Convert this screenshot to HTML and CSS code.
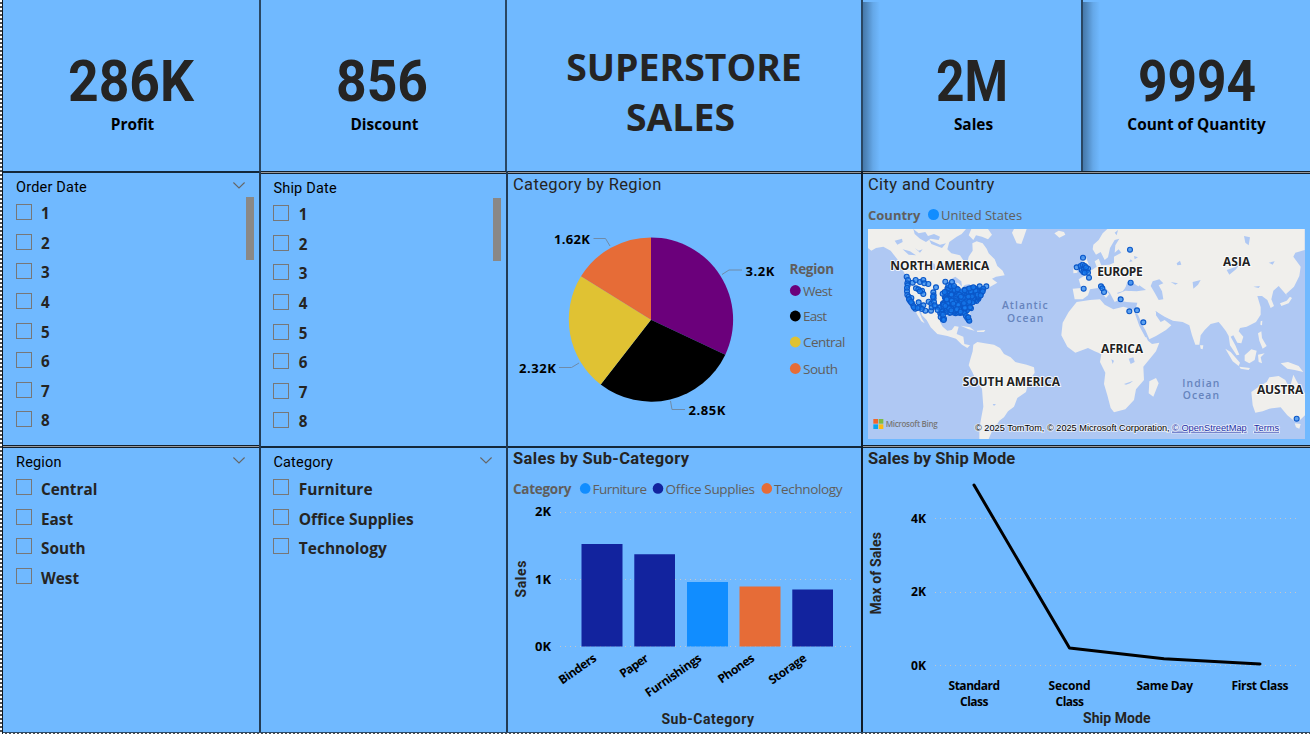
FILE: index.html
```html
<!DOCTYPE html>
<html lang="en">
<head>
<meta charset="utf-8">
<title>Superstore Sales</title>
<link rel="stylesheet" href="styles.css">
</head>
<body>
<main class="board">
  <div class="row row-kpi">
    <section class="panel kpi shift">
      <svg class="num" width="130" height="46" viewBox="0 0 130 46"><text x="1" y="43" textLength="126" lengthAdjust="spacingAndGlyphs">286K</text></svg>
      <div class="cap">Profit</div>
    </section>
    <section class="panel kpi shift">
      <svg class="num" width="100" height="46" viewBox="0 0 100 46"><text x="2" y="43" textLength="92" lengthAdjust="spacingAndGlyphs">856</text></svg>
      <div class="cap">Discount</div>
    </section>
    <section class="panel banner"><h1>SUPERSTORE<span>SALES</span></h1></section>
    <section class="panel kpi shaded shift-sm">
      <svg class="num" width="78" height="46" viewBox="0 0 78 46"><text x="2" y="43" textLength="72" lengthAdjust="spacingAndGlyphs">2M</text></svg>
      <div class="cap">Sales</div>
    </section>
    <section class="panel kpi shaded last">
      <svg class="num" width="124" height="46" viewBox="0 0 124 46"><text x="4" y="43" textLength="118" lengthAdjust="spacingAndGlyphs">9994</text></svg>
      <div class="cap">Count of Quantity</div>
    </section>
  </div>

  <div class="row row-mid">
    <section class="panel slicer seam-high">
      <header><span class="order">Order Date</span><svg class="chev" width="12" height="7" viewBox="0 0 12 7"><path d="M.4 .5 6 6 11.6 .5"/></svg></header>
      <div class="slicer-body">
        <ul><li><i></i>1</li><li><i></i>2</li><li><i></i>3</li><li><i></i>4</li><li><i></i>5</li><li><i></i>6</li><li><i></i>7</li><li><i></i>8</li></ul>
        <div class="thumb"></div>
      </div>
    </section>
    <section class="panel slicer lower seam-double">
      <header><span>Ship Date</span></header>
      <div class="slicer-body">
        <ul><li><i></i>1</li><li><i></i>2</li><li><i></i>3</li><li><i></i>4</li><li><i></i>5</li><li><i></i>6</li><li><i></i>7</li><li><i></i>8</li></ul>
        <div class="thumb"></div>
      </div>
    </section>
    <section class="panel chart seam-double">
      <h2>Category by Region</h2>
      <svg width="353" height="247" viewBox="508 198 353 247">
        <path fill="#6b007b" d="M651 319.7V237.4A82.3 82.3 0 0 1 725.3 354.7Z"/>
        <path fill="#000" d="M651 319.7L725.3 354.7A82.3 82.3 0 0 1 600.7 384.5Z"/>
        <path fill="#e0c233" d="M651 319.7L600.7 384.5A82.3 82.3 0 0 1 581 276.3Z"/>
        <path fill="#e66c37" d="M651 319.7L581 276.3A82.3 82.3 0 0 1 651 237.4Z"/>
        <g class="leader"><path d="M593.5 238.5H605.5L610 246"/><path d="M722 274.5L729 270H742"/><path d="M559 367.5H571.5L579 363"/><path d="M670.5 401L672 409.5H685"/></g>
        <g class="datalabel">
          <text x="554" y="244" textLength="36">1.62K</text>
          <text x="745.5" y="276" textLength="29">3.2K</text>
          <text x="519" y="373" textLength="37">2.32K</text>
          <text x="688.5" y="415" textLength="37">2.85K</text>
        </g>
        <g class="legend">
          <text class="b" x="789.5" y="274" textLength="44.5">Region</text>
          <circle cx="795.3" cy="290.5" r="5.4" fill="#6b007b"/><text x="803" y="296" textLength="29.5">West</text>
          <circle cx="795.3" cy="316" r="5.4" fill="#000"/><text x="803" y="321" textLength="24">East</text>
          <circle cx="795.3" cy="342" r="5.4" fill="#e0c233"/><text x="803" y="347" textLength="42.5">Central</text>
          <circle cx="795.3" cy="368.5" r="5.4" fill="#e66c37"/><text x="803" y="374" textLength="35">South</text>
        </g>
      </svg>
    </section>
    <section class="panel chart last seam-double">
      <h2 class="city">City and Country</h2>
      <div class="map-legend"><b>Country</b><i></i><span>United States</span></div>
      <svg class="map" width="437" height="210" viewBox="24 27 1311 630">
        <rect x="24" y="27" width="1311" height="630" fill="#afc8f3"/>
        <g fill="#f0efec">
          <path d="M24 27H318L305 42 290 50 268 66 262 88 274 100 300 106 316 130 322 128 326 110 338 92 337 70 350 64 368 70 380 86 386 100 404 118 412 138 428 152 434 166 408 170 396 176 412 188 388 202 368 216 352 242 334 268 330 280 338 300 328 310 318 300 312 284 290 280 262 286 244 290 240 306 248 320 262 332 275 330 284 318 296 320 290 342 310 350 313 372 330 376 322 384 306 374 288 356 262 348 232 342 212 322 200 300 186 286 182 272 176 272 186 296 194 310 184 304 172 284 164 268 148 250 138 226 134 196 138 168 126 146 112 118 92 92 70 80 48 84 34 92 24 84Z"/>
          <path d="M334 27H384L396 44 384 58 366 50 348 46 340 60 326 46ZM456 38 462 27H500L492 50 484 72 470 70ZM583 40 596 32 612 36 616 44 598 53ZM302 317 330 322 344 332 326 328ZM350 332 376 330 372 336 352 336Z"/>
          <path d="M340 374 352 366 374 370 402 374 420 384 432 402 452 412 466 426 500 434 522 442 524 458 506 484 498 516 472 534 462 560 444 574 432 592 418 602 408 618 396 634 386 657H358L358 626 364 592 370 560 366 506 348 482 338 458 326 436 332 414 338 394Z"/>
          <path d="M650 246 690 240 720 238 734 254 760 268 790 260 818 268 826 280 842 318 864 362 876 372 898 368 888 394 850 440 852 480 828 508 822 540 796 568 762 577 752 564 742 526 732 492 736 458 720 426 724 402 704 394 684 384 646 398 622 380 604 346 608 308 626 276ZM868 484 888 474 896 490 880 530 866 520Z"/>
          <path d="M638 206 664 204 656 178 672 168 690 154 710 140 704 124 716 116 724 136 748 134 762 128 762 110 784 98 776 88 764 98 766 76 778 56 764 60 750 84 744 112 734 120 722 96 708 104 698 88 700 74 716 60 728 40 742 27H1334V90L1306 98 1300 110 1322 140 1318 168 1302 200 1278 222 1284 230 1256 198 1240 212 1234 238 1242 258 1232 264 1222 240 1206 228 1192 228 1202 262 1202 284 1188 306 1160 320 1140 324 1136 334 1150 350 1144 370 1132 368 1120 346 1112 350 1126 376 1138 404 1130 406 1110 376 1106 348 1098 334 1086 318 1076 306 1052 312 1034 330 1022 346 1018 374 1006 374 996 346 988 316 968 306 938 302 912 292 888 274 888 286 902 306 914 300 934 316 918 330 888 348 868 358 856 330 836 298 824 278 832 248 800 246 780 242 772 222 796 212 830 214 858 210 838 196 830 206 816 192 800 198 788 214 772 218 776 240 764 246 750 220 728 194 724 200 748 222 738 234 714 204 690 208 684 226 668 238 644 238Z"/>
          <path d="M662 116 678 112 688 138 696 154 668 166 676 148ZM640 142 654 136 652 158 640 160ZM1096 386 1112 396 1140 428 1136 438 1118 424ZM1138 440 1170 444 1166 450 1142 446ZM1154 406 1174 388 1190 392 1184 420 1168 430 1154 422ZM1194 404 1214 400 1202 412 1206 430 1196 426ZM1262 430 1284 426 1316 438 1330 456 1304 450 1282 446ZM1194 340 1204 334 1206 354 1220 378 1208 386 1198 362ZM1260 250 1280 242 1290 230 1296 234 1286 250 1264 258ZM1202 304 1207 302 1206 316 1201 314ZM1020 376 1030 376 1028 388 1022 386Z"/>
          <path d="M1174 516 1196 500 1220 486 1228 472 1256 468 1276 480 1282 492 1292 494 1300 464 1310 484 1324 506 1335 520V586L1320 600 1304 604 1282 586 1262 562 1228 566 1208 574 1186 578 1178 556ZM1304 610 1322 612 1318 626 1308 622Z"/>
        </g>
        <g fill="#afc8f3">
          <path d="M796 204 802 186 814 184 824 192 846 206 834 212 804 212ZM878 184 898 178 910 190 896 196 906 214 910 238 896 240 884 218 872 198ZM824 278 834 284 862 350 856 352 838 318ZM884 272 914 290 938 302 926 306 904 292ZM160 27 176 40 196 36 204 48 222 42 240 50 236 60 212 56 198 66 180 56 164 42ZM208 60 240 74 258 70 246 84 214 72ZM104 62 126 56 128 66 112 74ZM128 88 150 94 168 106 146 104ZM164 84 176 92 188 88 180 98ZM210 124 224 132 226 150 216 144ZM272 178 286 170 304 184 306 200 294 188 280 190ZM310 196 330 192 326 202ZM806 416 820 412 824 426 812 432ZM754 418 762 422 758 432ZM792 492 820 482 810 490 798 494ZM998 186 1022 180 1014 194 1000 206ZM950 130 960 122 964 134 952 136ZM1152 48 1170 52 1166 76 1156 68ZM1226 128 1244 124 1238 134ZM1100 150 1124 142 1142 116 1146 124 1128 148 1108 164ZM1180 200 1200 198 1196 204ZM764 38 774 30 770 46ZM404 480 414 474 416 480ZM398 552 408 552 402 558ZM808 126 812 118 818 124ZM822 108 834 112 824 118ZM932 186 954 190 946 194Z"/>
        </g>
        <g class="place">
          <text x="91" y="149" textLength="297">NORTH AMERICA</text>
          <text x="308" y="498" textLength="292">SOUTH AMERICA</text>
          <text x="712" y="167" textLength="136">EUROPE</text>
          <text x="1089" y="137" textLength="82">ASIA</text>
          <text x="723" y="399" textLength="126">AFRICA</text>
          <text x="1191" y="522" textLength="139">AUSTRA</text>
        </g>
        <g class="ocean">
          <text x="426" y="268" textLength="137">Atlantic</text><text x="441" y="305" textLength="109">Ocean</text>
          <text x="967" y="500" textLength="111">Indian</text><text x="968" y="537" textLength="109">Ocean</text>
        </g>
        <g id="cities" class="cities"></g>
        <path fill="#f1652a" d="M40 597h14v14H40z"/><path fill="#7fbb42" d="M56 597h14v14H56z"/><path fill="#0aa5ef" d="M40 613h14v14H40z"/><path fill="#fdbb12" d="M56 613h14v14H56z"/>
        <text class="bing" x="77" y="621" textLength="156">Microsoft Bing</text>
        <g class="credit">
          <text x="345" y="632" textLength="584" lengthAdjust="spacingAndGlyphs">© 2025 TomTom, © 2025 Microsoft Corporation,</text>
          <text class="link" x="936" y="632" textLength="224" lengthAdjust="spacingAndGlyphs">© OpenStreetMap</text>
          <text class="link" x="1182" y="632" textLength="75" lengthAdjust="spacingAndGlyphs">Terms</text>
        </g>
      </svg>
    </section>
  </div>

  <div class="row row-low">
    <section class="panel slicer seam-double">
      <header><span>Region</span><svg class="chev" width="12" height="7" viewBox="0 0 12 7"><path d="M.4 .5 6 6 11.6 .5"/></svg></header>
      <div class="slicer-body"><ul><li><i></i>Central</li><li><i></i>East</li><li><i></i>South</li><li><i></i>West</li></ul></div>
    </section>
    <section class="panel slicer second seam-low">
      <header><span>Category</span><svg class="chev" width="12" height="7" viewBox="0 0 12 7"><path d="M.4 .5 6 6 11.6 .5"/></svg></header>
      <div class="slicer-body"><ul><li><i></i>Furniture</li><li><i></i>Office Supplies</li><li><i></i>Technology</li></ul></div>
    </section>
    <section class="panel chart strong seam-low">
      <h2 class="sub">Sales by Sub-Category</h2>
      <svg width="353" height="260" viewBox="508 472 353 260">
        <g class="legend">
          <text class="b" x="513" y="494" textLength="58.5">Category</text>
          <circle cx="585.2" cy="488.4" r="5.3" fill="#118dff"/><text x="592.5" y="494" textLength="54.5">Furniture</text>
          <circle cx="658" cy="488.4" r="5.3" fill="#12239e"/><text x="665.5" y="494" textLength="89.5">Office Supplies</text>
          <circle cx="766.8" cy="488.4" r="5.3" fill="#e66c37"/><text x="774" y="494" textLength="68.5">Technology</text>
        </g>
        <g class="grid"><path d="M560 512.5H853"/><path d="M560 579.5H853"/><path d="M560 646.5H853"/></g>
        <g fill="#12239e"><path d="M581.5 544h41v102.5h-41zM634.3 554.3h40.7v92.2h-40.7zM792.3 589.5h40.7v57h-40.7z"/></g>
        <path fill="#118dff" d="M687 582h41v64.5h-41z"/><path fill="#e66c37" d="M739.5 586.6h41v59.9h-41z"/>
        <g class="tick"><text x="535" y="516" textLength="16" lengthAdjust="spacingAndGlyphs">2K</text><text x="535" y="584" textLength="16" lengthAdjust="spacingAndGlyphs">1K</text><text x="535" y="651" textLength="16" lengthAdjust="spacingAndGlyphs">0K</text></g>
        <g class="tick slant">
          <text transform="translate(597.5 660) rotate(-35)" textLength="43">Binders</text>
          <text transform="translate(649.5 660) rotate(-35)" textLength="32">Paper</text>
          <text transform="translate(702.5 660) rotate(-35)" textLength="65.5">Furnishings</text>
          <text transform="translate(755.5 660) rotate(-35)" textLength="41.5">Phones</text>
          <text transform="translate(807.5 660) rotate(-35)" textLength="43">Storage</text>
        </g>
        <text class="axis" transform="translate(526 597.5) rotate(-90)" textLength="37">Sales</text>
        <text class="axis" x="661.5" y="724" textLength="92.5">Sub-Category</text>
      </svg>
    </section>
    <section class="panel chart strong last seam-double">
      <h2 class="ship">Sales by Ship Mode</h2>
      <svg width="447" height="260" viewBox="863 472 447 260">
        <g class="grid"><path d="M935 518.5H1296"/><path d="M935 592.5H1296"/><path d="M935 665.5H1296"/></g>
        <path class="trend" d="M974 485L1069.5 648 1164 658.7 1260 664"/>
        <g class="tick"><text x="911" y="523" textLength="15" lengthAdjust="spacingAndGlyphs">4K</text><text x="911" y="596" textLength="15" lengthAdjust="spacingAndGlyphs">2K</text><text x="911" y="670" textLength="15" lengthAdjust="spacingAndGlyphs">0K</text></g>
        <g class="tick">
          <text x="948.5" y="690" textLength="51.5">Standard</text><text x="960" y="706" textLength="28.5">Class</text>
          <text x="1048.5" y="690" textLength="42">Second</text><text x="1055.5" y="706" textLength="28.5">Class</text>
          <text x="1136.5" y="690" textLength="56.5">Same Day</text>
          <text x="1231.5" y="690" textLength="57">First Class</text>
        </g>
        <text class="axis" transform="translate(881 614.5) rotate(-90)" textLength="82.5">Max of Sales</text>
        <text class="axis" x="1083" y="723" textLength="67.5">Ship Mode</text>
      </svg>
    </section>
  </div>
</main>
<script src="map.js"></script>
</body>
</html>
```

FILE: styles.css
```css
* { box-sizing: border-box; }
html, body { margin: 0; }
body {
  width: 1310px;
  height: 734px;
  overflow: hidden;
  padding-left: 2px;
  background: repeating-linear-gradient(180deg, #fff 0 2px, #4d4d4d 2px 4px);
  font-family: "Open Sans", "Noto Sans", sans-serif;
  color: #252423;
}
.board {
  height: 734px;
  border-left: 1px solid #101c28;
  background: #70b9ff;
}
.board::after {
  content: "";
  display: block;
  height: 2px;
  background: linear-gradient(#2b4a69, #2b4a69) 0 0 / 100% 1px no-repeat,
    repeating-linear-gradient(90deg, #fff 0 2px, #4d4d4d 2px 4px);
}
.row { display: grid; }
.row-kpi { height: 171px; grid-template-columns: 258px 246px 356px 220px 227px; }
.row-mid { height: 274px; grid-template-columns: 258px 247px 355px 447px; }
.row-low { height: 287px; grid-template-columns: 258px 247px 355px 447px; }

.panel {
  position: relative;
  min-width: 0;
  min-height: 0;
  overflow: hidden;
  border-right: 2px solid #223b54;
}
.row-kpi .panel { border-right-color: #2a4763; }
.row-mid .chart, .row-low .chart { border-right-color: #101c28; }
.row .last { border-right: 0; }
.seam-double, .seam-high, .seam-low { padding-top: 3px; background-repeat: no-repeat; background-size: 100% 3px; }
.seam-double { background-image: linear-gradient(#14202c 0 1px, #96999d 1px 2px, #14202c 2px 3px); }
.seam-high { background-image: linear-gradient(#14283a 0 2px, transparent 2px); }
.seam-low { background-image: linear-gradient(transparent 0 1px, #14283a 1px 3px); }

/* KPI cards */
.kpi { display: flex; flex-direction: column; align-items: center; padding-top: 58px; }
.shift { padding-left: 3px; }
.shift-sm { padding-left: 3px; }
.num { display: block; flex: none; margin-right: 1px; overflow: visible; }
.num text { font: 700 58px Roboto, sans-serif; fill: #252423; }
.cap { font-size: 15.4px; font-weight: 700; line-height: 20px; margin-top: 11px; color: #000; white-space: nowrap; }
.shaded {
  background: linear-gradient(90deg, rgba(20, 45, 70, .46), rgba(20, 45, 70, .34) 4px, rgba(20, 45, 70, .12) 10px, transparent 17px) 0 2px no-repeat;
}
.banner { text-align: center; }
.banner h1 { margin: 42px 0 0; font-size: 37.4px; line-height: 50px; font-weight: 700; }
.banner span { display: block; padding-right: 7px; }

/* Slicers */
.slicer { padding-left: 13px; }
.slicer header { display: flex; justify-content: space-between; height: 23px; padding: 5px 14px 0 0; font: 400 14.5px/18px Roboto, sans-serif; letter-spacing: .2px; color: #000; }
.chev { margin-top: 3px; fill: none; stroke: #666; stroke-width: 1.1; }
.slicer-body { display: flex; justify-content: space-between; padding: 0 5px 0 0; }
.slicer ul { list-style: none; margin: 7px 0 0; padding: 0; }
.slicer li { display: flex; height: 29.65px; font-size: 15.2px; line-height: 19px; font-weight: 700; white-space: nowrap; }
.slicer li i { width: 16px; height: 16px; margin-right: 9px; border: 1px solid #777; flex: none; }
.thumb { width: 8px; height: 63px; background: #8a8886; }
.lower, .second { padding-left: 12.4px; }
.lower header { height: 24px; padding-top: 6px; }
.lower .slicer-body { padding-right: 5px; }
.lower li i, .second li i { margin-right: 9.4px; }
.row-low .slicer header { height: 24px; padding-top: 6px; }
.row-low li { font-size: 15.3px; line-height: 20px; }
.second li { font-size: 15.5px; }

/* Charts */
.chart h2 { margin: 0; height: 24px; padding-left: 5px; font: 400 16.5px/21px Roboto, sans-serif; letter-spacing: .37px; white-space: nowrap; }
.strong h2 { font-weight: 700; letter-spacing: .35px; }
.strong .ship { letter-spacing: .1px; }
.chart svg { display: block; }
.leader path { fill: none; stroke: #6f8ba8; stroke-width: 1; }
.datalabel text { font: 700 13px "Open Sans", sans-serif; fill: #000; }
.legend text { font: 400 13.5px "Open Sans", sans-serif; fill: #605e5c; }
.legend .b { font-weight: 700; }
.tick text { font: 700 12px "Open Sans", sans-serif; fill: #000; }
.slant text { text-anchor: end; font-size: 12px; }
.axis { font: 700 14px Roboto, sans-serif; fill: #252423; }
.grid path { stroke: #c3c6cb; stroke-width: 1; stroke-dasharray: 1 4; shape-rendering: crispEdges; }
.trend { fill: none; stroke: #000; stroke-width: 3; stroke-linecap: round; stroke-linejoin: round; }

/* Map */
.map-legend { display: flex; align-items: center; height: 31px; padding: 2px 0 0 5px; font-size: 13px; color: #605e5c; }
.map-legend i { width: 10.6px; height: 10.6px; margin: 0 2px 0 8px; border-radius: 50%; background: #118dff; }
.map { margin-left: 5px; }
.place text { font: 700 36px "Open Sans", sans-serif; fill: #222; stroke: #fff; stroke-width: 5px; paint-order: stroke; }
.ocean text { font: 600 31px "Open Sans", sans-serif; fill: #6684bd; }
.bing { font: 600 24px "Open Sans", sans-serif; fill: #777; }
.credit text { font: 400 27px "Liberation Sans", Arial, sans-serif; fill: #000; stroke: #e9effa; stroke-width: 5px; paint-order: stroke; }
.credit .link { fill: #1b2fa8; text-decoration: underline; }
.cities circle { fill: rgba(25, 125, 240, .68); stroke: #0b58c9; stroke-width: 3.4px; }
```

FILE: map.js
```js
// City markers, in map units.
const layer = document.getElementById('cities');
const add = (x, y) => {
  const c = document.createElementNS('http://www.w3.org/2000/svg', 'circle');
  c.setAttribute('cx', x);
  c.setAttribute('cy', y);
  c.setAttribute('r', 7.4);
  layer.appendChild(c);
};

const east = [[256,208],[275,200],[300,204],[345,204],[368,208],[366,222],[350,245],[330,268],[318,280],[262,280],[240,284],[236,262],[254,244]];
const inside = (x, y) => {
  let hit = false;
  for (let i = 0, j = east.length - 1; i < east.length; j = i++) {
    const [xi, yi] = east[i], [xj, yj] = east[j];
    if ((yi > y) !== (yj > y) && x < (xj - xi) * (y - yi) / (yj - yi) + xi) hit = !hit;
  }
  return hit;
};
let seed = 11;
const rand = () => (seed = (seed * 16807) % 2147483647) / 2147483647;
for (let n = 0; n < 230;) {
  const x = 235 + rand() * 140, y = 198 + rand() * 90;
  if (inside(x, y)) { add(x, y); n++; }
}

[[140,170],[144,180],[142,190],[143,196],[141,204],[141,214],[142,224],[146,230],[154,234],[150,242],[147,238],[156,250],[160,258],[166,266],[162,262],[153,246],
 [158,188],[167,180],[180,186],[190,180],[193,190],[205,192],[228,202],[168,205],[175,208],[186,212],[190,222],[180,214],[220,217],[221,226],[221,235],[219,230],
 [206,245],[214,251],[222,246],[176,247],[180,262],[190,256],[186,267],[196,272],[173,264],[213,272],[215,262],[226,260],[233,270],[224,256],
 [256,185],[276,186],[265,196],[272,199],[282,198],[293,208],[248,221],[254,216],[340,202],[359,199],[379,199],[370,206],[368,214],[362,226],
 [242,291],[248,298],[252,296],[251,300],[249,284],[318,288],[322,294],[326,299],[328,302],[325,292],
 [669,113],[650,142],[662,138],[668,134],[674,138],[665,150],[672,148],[670,156],[680,152],[684,146],[684,158],[674,158],[678,142],[687,173],[671,206],
 [810,89],[812,188],[723,199],[727,205],[732,216],[782,238],[808,274],[831,271],[850,307],[1310,596]].forEach(([x, y]) => add(x, y));
```
